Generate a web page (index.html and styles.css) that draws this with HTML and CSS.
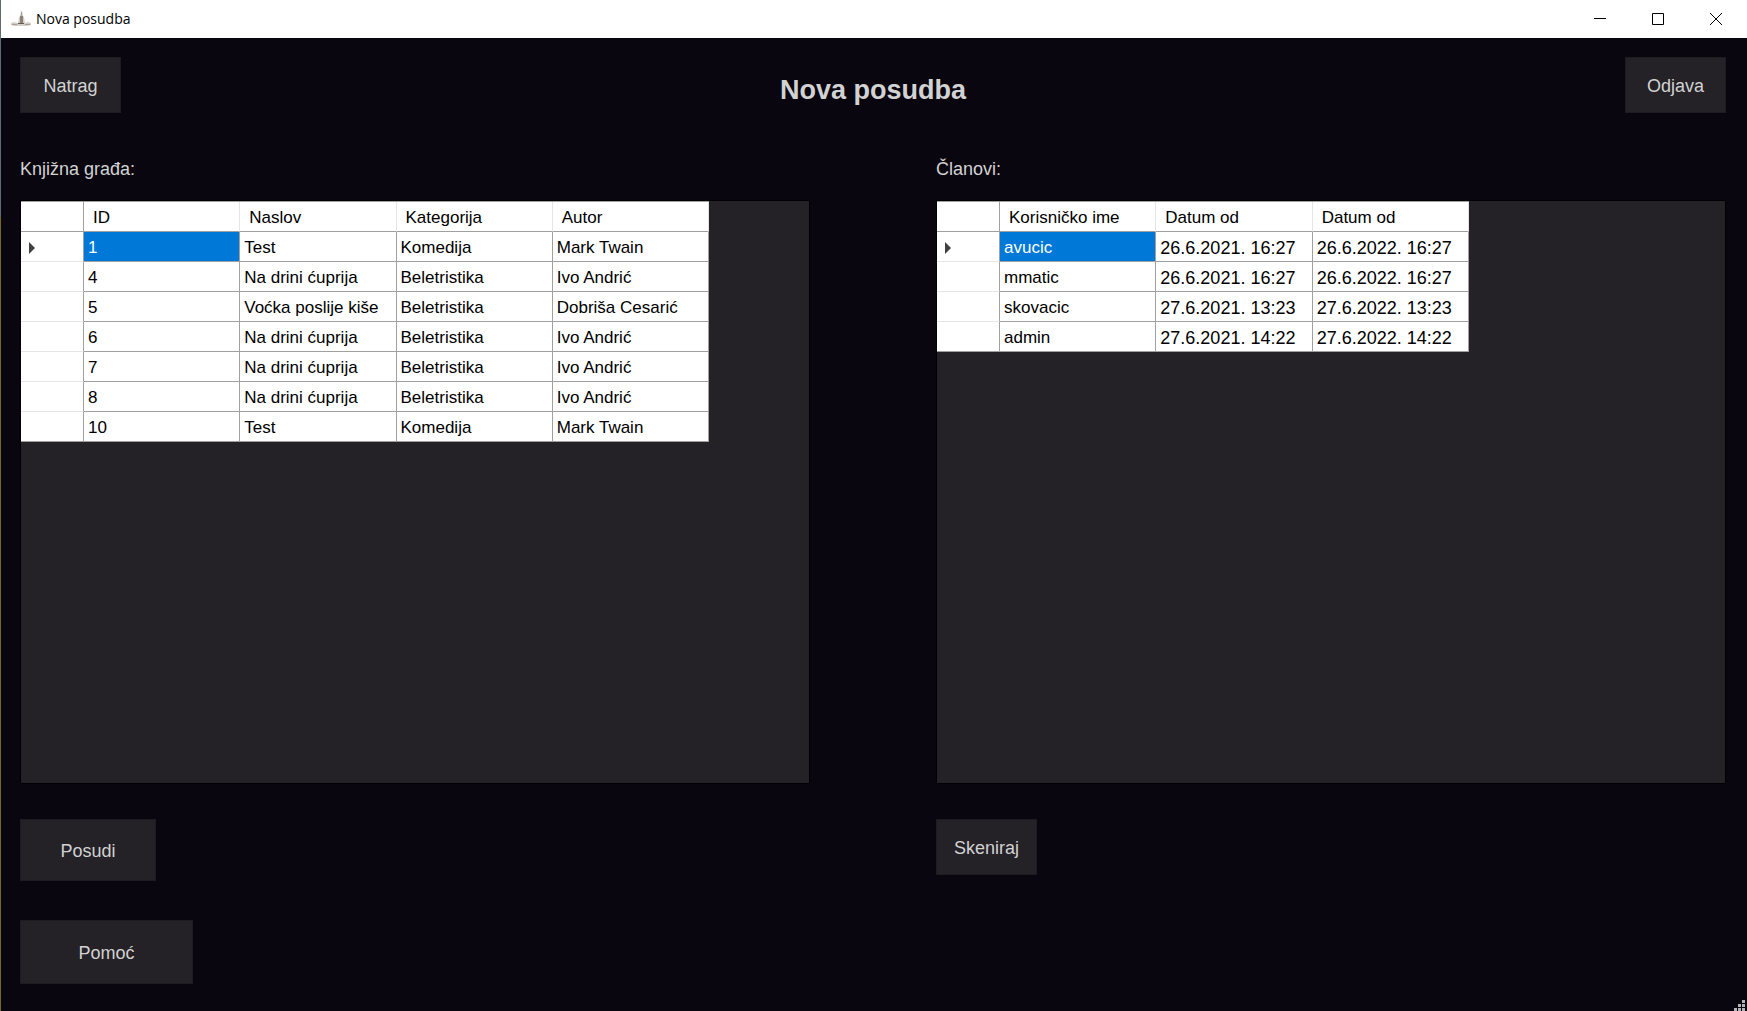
FILE: index.html
```html
<!DOCTYPE html>
<html lang="hr">
<head>
<meta charset="utf-8">
<title>Nova posudba</title>
<link rel="stylesheet" href="styles.css">
</head>
<body>
<header class="titlebar">
  <svg class="app-icon" width="20" height="16" viewBox="0 0 20 16" aria-hidden="true">
    <path d="M0 12l3-1 4 1 1-6 1-1 1-5h1l1 5 1 1 1 6 3-1 3 1v2l-4 1H3l-3-1z" fill="#d5cfca"/>
    <path d="M9 5h3v7H9z" fill="#8c8177"/>
    <path d="M10 1h1v4h-1zM1 13h5v1H1zM14 13h5v1h-5z" fill="#a89f97"/>
    <path d="M7 12h6v1H7z" fill="#665b52"/>
  </svg>
  <span class="caption">Nova posudba</span>
  <div class="window-controls">
    <button type="button" aria-label="Minimiziraj"><svg width="12" height="12" viewBox="0 0 12 12"><path d="M0 5.500h12" stroke="#000"/></svg></button>
    <button type="button" aria-label="Maksimiziraj"><svg width="12" height="12" viewBox="0 0 12 12"><path d="M.5.5h11v11H.5z" fill="none" stroke="#000"/></svg></button>
    <button type="button" aria-label="Zatvori"><svg width="12" height="12" viewBox="0 0 12 12"><path d="M0 0l12 12M12 0L0 12" stroke="#000"/></svg></button>
  </div>
</header>
<main class="form">
  <div class="topbar">
    <button class="btn" type="button">Natrag</button>
    <h1>Nova posudba</h1>
    <button class="btn" type="button">Odjava</button>
  </div>
  <div class="columns">
    <section class="column">
      <h2 id="books">Knjižna građa:</h2>
      <div class="grid-panel">
        <table class="data books" aria-labelledby="books">
          <thead><tr><th class="row-head"></th><th>ID</th><th>Naslov</th><th>Kategorija</th><th>Autor</th></tr></thead>
          <tbody>
            <tr><th class="row-head"><span class="marker"></span></th><td class="selected">1</td><td>Test</td><td>Komedija</td><td>Mark Twain</td></tr>
            <tr><th class="row-head"></th><td>4</td><td>Na drini ćuprija</td><td>Beletristika</td><td>Ivo Andrić</td></tr>
            <tr><th class="row-head"></th><td>5</td><td>Voćka poslije kiše</td><td>Beletristika</td><td>Dobriša Cesarić</td></tr>
            <tr><th class="row-head"></th><td>6</td><td>Na drini ćuprija</td><td>Beletristika</td><td>Ivo Andrić</td></tr>
            <tr><th class="row-head"></th><td>7</td><td>Na drini ćuprija</td><td>Beletristika</td><td>Ivo Andrić</td></tr>
            <tr><th class="row-head"></th><td>8</td><td>Na drini ćuprija</td><td>Beletristika</td><td>Ivo Andrić</td></tr>
            <tr><th class="row-head"></th><td>10</td><td>Test</td><td>Komedija</td><td>Mark Twain</td></tr>
          </tbody>
        </table>
      </div>
      <div class="actions">
        <button class="btn btn-lend" type="button">Posudi</button>
        <button class="btn btn-help" type="button">Pomoć</button>
      </div>
    </section>
    <section class="column">
      <h2 id="members">Članovi:</h2>
      <div class="grid-panel">
        <table class="data members" aria-labelledby="members">
          <thead><tr><th class="row-head"></th><th>Korisničko ime</th><th>Datum od</th><th>Datum od</th></tr></thead>
          <tbody>
            <tr><th class="row-head"><span class="marker"></span></th><td class="selected">avucic</td><td class="date">26.6.2021. 16:27</td><td class="date">26.6.2022. 16:27</td></tr>
            <tr><th class="row-head"></th><td>mmatic</td><td class="date">26.6.2021. 16:27</td><td class="date">26.6.2022. 16:27</td></tr>
            <tr><th class="row-head"></th><td>skovacic</td><td class="date">27.6.2021. 13:23</td><td class="date">27.6.2022. 13:23</td></tr>
            <tr><th class="row-head"></th><td>admin</td><td class="date">27.6.2021. 14:22</td><td class="date">27.6.2022. 14:22</td></tr>
          </tbody>
        </table>
      </div>
      <div class="actions">
        <button class="btn" type="button">Skeniraj</button>
      </div>
    </section>
  </div>
  <svg class="grip" width="12" height="12" viewBox="0 0 12 12" aria-hidden="true">
    <path d="M9 1h3v3H9zM5 5h3v3H5zM9 5h3v3H9zM1 9h3v3H1zM5 9h3v3H5zM9 9h3v3H9z" fill="#b5b3b8"/>
  </svg>
</main>
</body>
</html>
```
FILE: styles.css
```css
* { box-sizing: border-box; }

body {
  margin: 0;
  min-height: 100vh;
  display: flex;
  flex-direction: column;
  background: #0a0610;
  color: #d2d2d2;
  font: 17px/20px "Liberation Sans", Arial, sans-serif;
}

button { font: inherit; color: inherit; border: 0; padding: 0; }

.titlebar {
  display: flex;
  align-items: center;
  height: 38px;
  padding: 0 2px 0 10px;
  background: #fff;
  color: #000;
  border-left: 1px solid #5f6b70;
}

.app-icon { margin-right: 5px; }

.caption { font: 14px/20px "Open Sans", "Segoe UI", sans-serif; }

.window-controls { display: flex; margin-left: auto; }

.window-controls button {
  display: grid;
  place-items: center;
  width: 58px;
  height: 38px;
  background: none;
}

.form {
  position: relative;
  flex: 1;
  padding: 19px 21px 26px 19px;
  border-left: 1px solid;
  border-image: linear-gradient(#5f6b70 180px, #77691a 180px) 1;
}

.topbar {
  display: grid;
  grid-template-columns: 1fr auto 1fr;
  align-items: center;
}

.topbar .btn:last-child { justify-self: end; }

h1 { margin: 10px 0 0; font-size: 27px; line-height: 32px; }

h2 { margin: 0 0 21px; font-size: 18px; font-weight: 400; line-height: 20px; }

.btn {
  width: 101px;
  height: 56px;
  padding-top: 2px;
  background: #242127;
  border: 1px solid #1e1b21;
  font-size: 18px;
}

.btn-lend { width: 136px; height: 62px; }

.btn-help { width: 173px; height: 64px; }

.columns {
  display: grid;
  grid-template-columns: 1fr 1fr;
  column-gap: 126px;
  margin-top: 46px;
}

.grid-panel {
  height: calc(100vh - 427px);
  min-height: 300px;
  overflow: auto;
  background: #242127;
  border: 1px solid #000;
}

.data {
  table-layout: fixed;
  border-collapse: separate;
  border-spacing: 0;
  background: #fff;
  color: #000;
  border-top: 1px solid #a0a0a0;
}

.books { width: 688px; }

.members { width: 532px; }

.data th, .data td {
  height: 30px;
  padding: 2px 0 0 4px;
  border-right: 1px solid #a0a0a0;
  border-bottom: 1px solid #a0a0a0;
  font-weight: 400;
  text-align: left;
  white-space: nowrap;
}

.data thead th { padding-left: 9px; border-right-color: #e5e5e5; }

.data .row-head { width: 63px; border-bottom-color: #e5e5e5; padding-left: 8px; }

.data tr .row-head { border-right-color: #a0a0a0; }

.data thead .row-head, .data tr:last-child .row-head { border-bottom-color: #a0a0a0; }

.data .selected { background: #0078d7; color: #fff; }

.data .date { font-size: 18px; }

.marker {
  display: block;
  width: 0;
  border: 6px solid transparent;
  border-left-color: #404040;
  border-right-width: 0;
}

.actions {
  display: flex;
  flex-direction: column;
  align-items: flex-start;
  gap: 39px;
  margin-top: 35px;
}

.grip { position: absolute; right: 2px; bottom: 0; }
```
